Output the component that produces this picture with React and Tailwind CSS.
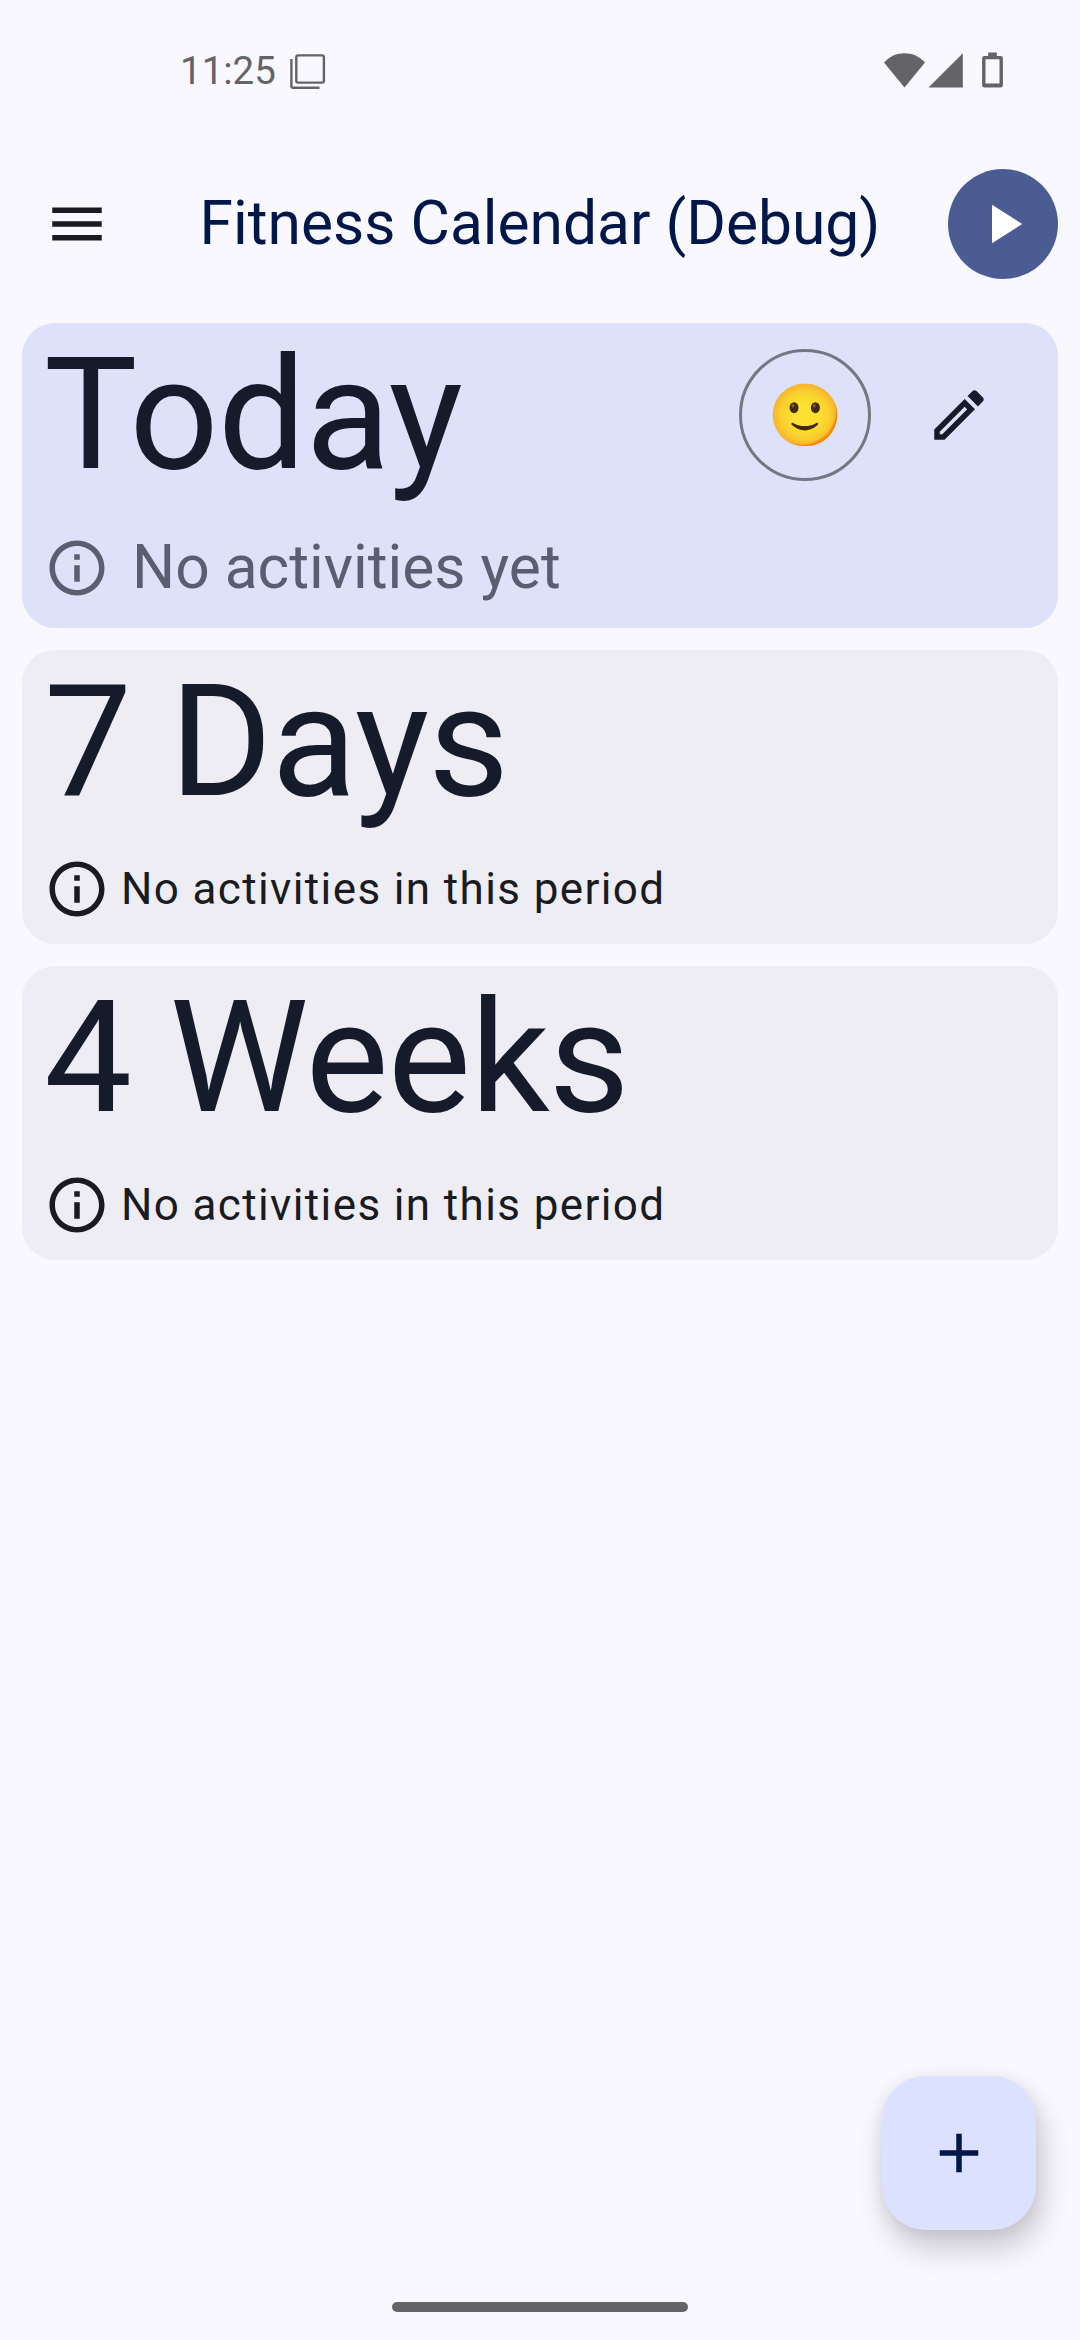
import React from "react";

function InfoIcon({ className }) {
  return (
    <svg viewBox="0 0 24 24" fill="currentColor" className={`size-[66px] shrink-0 ${className}`}>
      <path d="M11 7h2v2h-2zm0 4h2v6h-2zm1-9C6.48 2 2 6.48 2 12s4.48 10 10 10 10-4.48 10-10S17.52 2 12 2zm0 18c-4.41 0-8-3.59-8-8s3.59-8 8-8 8 3.59 8 8-3.59 8-8 8z" />
    </svg>
  );
}

function Smiley() {
  return (
    <svg viewBox="0 0 66 64" className="h-[64px] w-[66px]">
      <defs>
        <radialGradient id="face" cx="0.5" cy="0.5" r="0.5">
          <stop offset="0.4" stopColor="#fde030" />
          <stop offset="0.75" stopColor="#fad02f" />
          <stop offset="1" stopColor="#f6b42c" />
        </radialGradient>
        <radialGradient id="edge" cx="0.44" cy="0.44" r="0.56">
          <stop offset="0.93" stopColor="#f28b00" stopOpacity="0" />
          <stop offset="1" stopColor="#f28b00" />
        </radialGradient>
      </defs>
      <rect x="0.7" y="0.8" width="64.6" height="62.2" rx="31" fill="url(#face)" />
      <rect x="0.7" y="0.8" width="64.6" height="62.2" rx="31" fill="url(#edge)" />
      <ellipse cx="22" cy="24.7" rx="4.5" ry="5.5" fill="#422b0d" />
      <ellipse cx="43.4" cy="24.7" rx="4.5" ry="5.5" fill="#422b0d" />
      <ellipse cx="20.9" cy="22.7" rx="1.4" ry="1.7" fill="#896024" />
      <ellipse cx="42.3" cy="22.7" rx="1.4" ry="1.7" fill="#896024" />
      <path d="M19.6 40.3c-.6 1 .2 1.700 1 2.300 3.300 3 7.600 4.900 12.200 4.900s8.900-1.900 12.200-4.900c.8-.7 1.500-1.300 1-2.300-.6-.8-1.600-.3-2.400.1-3.400 1.700-7 2.700-10.800 2.700s-7.400-1-10.800-2.700c-.8-.4-1.800-.9-2.400-.1z" fill="#422b0d" />
    </svg>
  );
}

function StatusBar() {
  return (
    <div className="flex h-[136px] items-start justify-between pt-[48px] pr-[76px] pl-[180px] text-[#646466]">
      <div className="flex items-start">
        <span className="text-[38.5px] leading-[46px]">11:25</span>
        <svg viewBox="0 0 38 38" className="mt-[4px] ml-[12px] size-[38px]" fill="none" stroke="currentColor" strokeWidth="2.4">
          <rect x="8.3" y="3.4" width="27.6" height="27.2" rx="1.8" />
          <path d="M3.400 7v27.500a1.200 1.200 0 0 0 1.200 1.200H31.500" />
        </svg>
      </div>
      <div className="flex items-start">
        <svg viewBox="0 0 42 36" className="mt-[4px] h-[36px] w-[42px]" fill="currentColor">
          <path d="M21.500 35.500L1 10.600C6.500 4.500 13.500 1.300 21.500 1.300S36.500 4.500 42 10.600z" />
        </svg>
        <svg viewBox="0 0 36 36" className="mt-[4px] ml-[3px] size-[36px]" fill="currentColor">
          <path d="M.5 35.600L34.800 1.300V35.600z" />
        </svg>
        <svg viewBox="0 0 22 36" className="mt-[4px] ml-[18px] h-[36px] w-[22px]" fill="currentColor">
          <path fillRule="evenodd" d="M6.200.4h8.600V4H18.600a2.300 2.300 0 0 1 2.300 2.300V33.200a2.300 2.300 0 0 1-2.300 2.300H2.400A2.300 2.300 0 0 1 .1 33.200V6.300A2.300 2.300 0 0 1 2.400 4H6.200zM3.500 7.300V31.500H17.500V7.300z" />
        </svg>
      </div>
    </div>
  );
}

function AppBar() {
  return (
    <header className="flex h-[176px] items-center pr-[22px] pl-[44px]">
      <svg viewBox="0 0 24 24" fill="currentColor" className="size-[66px] shrink-0 text-[#1a1b20]">
        <path d="M3 18h18v-2H3v2zm0-5h18v-2H3v2zm0-7v2h18V6H3z" />
      </svg>
      <h1 className="flex-1 pb-[2px] pl-[22px] text-center text-[60.5px] leading-[77px] whitespace-nowrap text-[#001849]">
        Fitness Calendar (Debug)
      </h1>
      <button className="flex size-[110px] shrink-0 items-center justify-center rounded-full bg-[#4a5c92] text-white">
        <svg viewBox="0 0 24 24" fill="currentColor" className="size-[66px]">
          <path d="M8 5v14l11-7z" />
        </svg>
      </button>
    </header>
  );
}

function CardTitle({ children }) {
  return (
    <h2 className="text-[156.75px] leading-[176px] tracking-[-0.75px] whitespace-nowrap text-[#161b2c]">{children}</h2>
  );
}

function TodayCard() {
  return (
    <section className="h-[305px] rounded-[33px] bg-[#dde1f9] px-[22px] pt-[4px]">
      <div className="flex h-[176px] items-center justify-between">
        <CardTitle>Today</CardTitle>
        <div className="flex items-center pr-[44px]">
          <button className="flex size-[132px] items-center justify-center rounded-full border-[3px] border-[#757780]">
            <Smiley />
          </button>
          <svg viewBox="0 0 24 24" fill="currentColor" className="ml-[55px] size-[66px] text-[#161b2c]">
            <path d="M14.060 9.020l.92.92L5.920 19H5v-.92l9.060-9.060M17.660 3c-.25 0-.51.1-.7.29l-1.830 1.830 3.750 3.750 1.830-1.830c.39-.39.39-1.020 0-1.410l-2.340-2.340c-.2-.2-.45-.29-.71-.29zm-3.600 3.190L3 17.250V21h3.750L17.810 9.940l-3.750-3.750z" />
          </svg>
        </div>
      </div>
      <div className="mt-[32px] flex h-[66px] items-center gap-[22px] text-[#595e71]">
        <InfoIcon className="text-[#595e71]" />
        <span className="pb-[2px] text-[60.5px] leading-[77px] whitespace-nowrap">No activities yet</span>
      </div>
    </section>
  );
}

function PeriodCard({ title }) {
  return (
    <section className="h-[294px] rounded-[33px] bg-[#eeedf4] px-[22px] pt-[4px]">
      <CardTitle>{title}</CardTitle>
      <div className="mt-[26px] flex h-[66px] items-center gap-[11px] text-[#1a1b20]">
        <InfoIcon className="text-[#1a1b20]" />
        <span className="text-[44px] leading-[66px] tracking-[1.375px] whitespace-nowrap">No activities in this period</span>
      </div>
    </section>
  );
}

export default function App() {
  return (
    <div className="relative flex h-[2340px] w-[1080px] flex-col overflow-hidden bg-[#faf8ff] font-['Roboto',sans-serif]">
      <StatusBar />
      <AppBar />
      <main className="flex flex-1 flex-col gap-[22px] px-[22px] pt-[11px]">
        <TodayCard />
        <PeriodCard title="7 Days" />
        <PeriodCard title="4 Weeks" />
      </main>
      <div className="flex h-[38px] justify-center">
        <div className="h-[10px] w-[296px] rounded-full bg-[#646466]" />
      </div>
      <button className="absolute right-[44px] bottom-[110px] flex size-[154px] items-center justify-center rounded-[44px] bg-[#dbe1ff] text-[#001849] shadow-[5px_18px_32px_rgba(0,0,0,0.20),0_2px_16px_rgba(0,0,0,0.07)]">
        <svg viewBox="0 0 24 24" fill="currentColor" className="size-[66px]">
          <path d="M19 13h-6v6h-2v-6H5v-2h6V5h2v6h6v2z" />
        </svg>
      </button>
    </div>
  );
}
